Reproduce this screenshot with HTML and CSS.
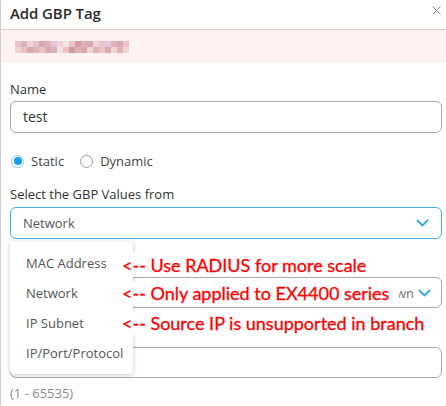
FILE: index.html
```html
<!DOCTYPE html>
<html>
<head>
<meta charset="utf-8">
<link rel="stylesheet" href="styles.css">
</head>
<body>
<div class="dialog">
  <div class="header">
    <span class="title">Add GBP Tag</span>
    <svg class="close" width="9" height="9" viewBox="0 0 9 9"><path d="M0.5 0.5L8.5 8.5M8.5 0.5L0.5 8.5" stroke="#8a8a8a" stroke-width="1" fill="none"/></svg>
  </div>
  <div class="banner">
    <div class="pix">
      <span class="a"></span><span class="b"></span><span class="c"></span><span class="a"></span><span class="d"></span><span class="b"></span><span class="e"></span><span class="c"></span><span class="f"></span><span class="a"></span><span class="g"></span><span class="b"></span><span class="d"></span><span class="c"></span><span class="a"></span><span class="e"></span><span class="b"></span><span class="d"></span><span class="a"></span>
      <span class="c"></span><span class="a"></span><span class="d"></span><span class="b"></span><span class="a"></span><span class="d"></span><span class="b"></span><span class="f"></span><span class="a"></span><span class="g"></span><span class="b"></span><span class="d"></span><span class="c"></span><span class="b"></span><span class="a"></span><span class="d"></span><span class="c"></span><span class="b"></span><span class="c"></span>
    </div>
  </div>
  <div class="form">
    <div class="label first">Name</div>
    <div class="input">test</div>
    <div class="radios">
      <span class="radio on"></span><span class="rlabel">Static</span>
      <span class="radio"></span><span class="rlabel">Dynamic</span>
    </div>
    <div class="label second">Select the GBP Values from</div>
    <div class="select active">
      <span class="val">Network</span>
      <svg class="chev" width="13" height="8" viewBox="0 0 13 8"><path d="M1 1L6.5 6.5L12 1" stroke="#2ea6ea" stroke-width="1.8" fill="none"/></svg>
    </div>
    <div class="select field2">
      <span class="val right">Unknown</span>
      <svg class="chev" width="13" height="8" viewBox="0 0 13 8"><path d="M1 1L6.5 6.5L12 1" stroke="#2ea6ea" stroke-width="1.8" fill="none"/></svg>
    </div>
    <div class="input field3"></div>
    <div class="hint">(1 - 65535)</div>
  </div>

  <div class="menu">
    <div class="item">MAC Address</div>
    <div class="item">Network</div>
    <div class="item">IP Subnet</div>
    <div class="item">IP/Port/Protocol</div>
  </div>
  <div class="note n1">&lt;-- Use RADIUS for more scale</div>
  <div class="note n2">&lt;-- Only applied to EX4400 series</div>
  <div class="note n3">&lt;-- Source IP is unsupported in branch</div>
</div>
</body>
</html>
```

FILE: styles.css
```css
* { box-sizing: border-box; }
html, body { margin: 0; padding: 0; background: #fff; }
body { font-family: "Open Sans", sans-serif; color: #333; }

.dialog {
  position: relative;
  width: 446px;
  height: 406px;
  border-left: 1px solid #cfcfcf;
  overflow: hidden;
}

.header {
  height: 30px;
  border-bottom: 1px solid #d2d2d2;
  display: flex;
  align-items: center;
  justify-content: space-between;
  padding: 0 5px 4px 9px;
}
.title { font-size: 15px; font-weight: 600; color: #2b2b2b; letter-spacing: -0.1px; }
.close { margin-top: -4px; }

.banner {
  height: 33px;
  background: #fff2f2;
  padding: 11px 0 0 14px;
}
.pix {
  display: grid;
  grid-template-columns: repeat(19, 6px);
  grid-auto-rows: 6px;
  width: 114px;
}
.pix span { display: block; }
.pix .a { background: #e9c3c6; }
.pix .b { background: #dfb2b8; }
.pix .c { background: #efd3d6; }
.pix .d { background: #d9a8b0; }
.pix .e { background: #e4c6d6; }
.pix .f { background: #f3e2e4; }
.pix .g { background: #d49aa6; }

.form { padding: 0 4px 0 9px; }

.label { font-size: 13px; line-height: 18px; color: #333; }
.label.first { margin-top: 17px; }
.label.second { margin-top: 14px; }

.input {
  margin-top: 3px;
  height: 32px;
  border: 1px solid #a9a9a9;
  border-radius: 6px;
  padding: 0 12px;
  font-size: 14px;
  line-height: 30px;
  color: #333;
}

.radios {
  margin-top: 18px;
  height: 20px;
  display: flex;
  align-items: center;
}
.radio {
  width: 13px;
  height: 13px;
  border: 1px solid #9a9a9a;
  border-radius: 50%;
  display: inline-flex;
  align-items: center;
  justify-content: center;
  margin-left: 1px;
}
.radio.on { border-color: #8fc9ee; }
.radio.on::after {
  content: "";
  width: 8px;
  height: 8px;
  border-radius: 50%;
  background: #1a9cf0;
}
.rlabel { font-size: 13px; color: #444; margin-left: 7px; margin-right: 15px; }

.select {
  height: 32px;
  border: 1px solid #a9a9a9;
  border-radius: 6px;
  display: flex;
  align-items: center;
  padding: 0 12px 0 12px;
  font-size: 13px;
  color: #555;
}
.select.active { margin-top: 4px; border-color: #42b0ef; }
.select .val { flex: 1; }
.select .val.right { text-align: right; color: #777; padding-right: 4px; }
.select.field2 { margin-top: 38px; height: 31px; padding-right: 10px; }
.input.field3 { margin-top: 39px; height: 31px; }

.hint { margin-top: 6px; font-size: 13px; line-height: 18px; color: #8a8a8a; }

.menu {
  position: absolute;
  left: 9px;
  top: 241px;
  width: 123px;
  height: 133px;
  background: #fff;
  border-radius: 4px;
  box-shadow: 0 1px 5px rgba(0,0,0,0.22);
  padding-top: 7px;
}
.item {
  height: 30px;
  line-height: 30px;
  padding-left: 16px;
  font-size: 13px;
  color: #555;
}

.note {
  position: absolute;
  left: 119px;
  height: 24px;
  line-height: 24px;
  background: #fff;
  color: #ff0000;
  font-family: Lato, "Liberation Sans", sans-serif;
  font-size: 18px;
  padding-left: 2px;
  -webkit-text-stroke: 0.3px #ff0000;
}
.n1 { top: 253px; }
.n2 { top: 281px; width: 279px; }
.n3 { top: 311px; }
```
